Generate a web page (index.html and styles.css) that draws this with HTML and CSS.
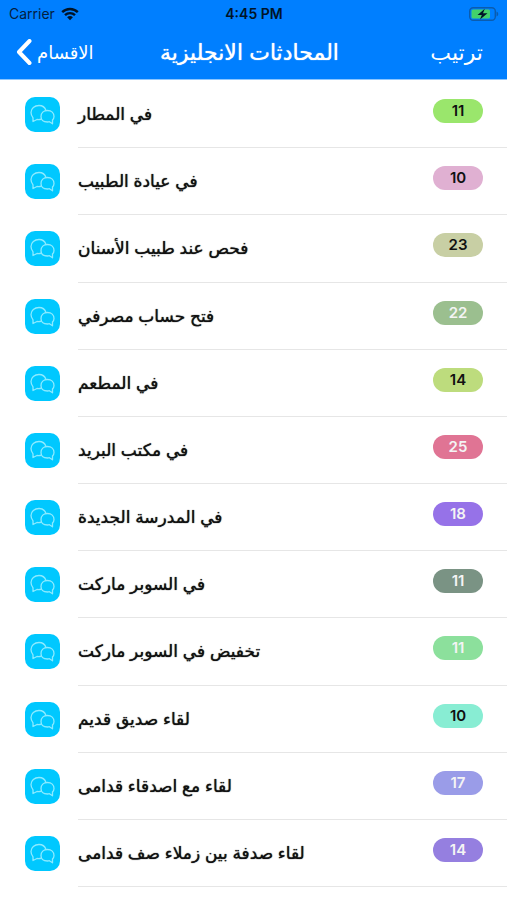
FILE: index.html
```html
<!DOCTYPE html>
<html lang="ar">

<head>
    <meta charset="UTF-8">
    <meta name="viewport" content="width=device-width, initial-scale=1.0">
    <title>المحادثات الانجليزية</title>
    <link rel="stylesheet" href="styles.css">
</head>

<body>
    <svg class="sprite" aria-hidden="true">
        <symbol id="chat" viewBox="0 0 35 35">
            <path d="M21 13.500C20 10.500 17.500 8.500 14 8.500C9.500 8.500 6 11.500 6 15.500C6 17.700 7 19.500 8 20.800V24.500L12 22.500C13.500 22.800 15 22.700 16.500 22.200" />
            <path d="M22.500 13.500C18.500 13.500 16 16 16 19.500C16 22.900 18.500 25 22.500 25C23.200 25 23.800 24.900 24.400 24.700L27.500 26.800V23C28.500 22 29 20.900 29 19.500C29 16 26.500 13.500 22.500 13.500Z" />
        </symbol>
    </svg>
    <header class="header">
        <div class="status">
            <div class="carrier">
                <span>Carrier</span>
                <svg class="wifi" viewBox="0 0 18 14" aria-hidden="true">
                    <path d="M1.200 5.200C5.500 0.900 12.500 0.900 16.800 5.200M4 8.200C6.800 5.400 11.200 5.400 14 8.200" />
                    <path class="dot" d="M6.100 10.200C7.800 8.700 10.200 8.700 11.900 10.200L9 13.200Z" />
                </svg>
            </div>
            <span class="time">4:45 PM</span>
            <svg class="battery" viewBox="0 0 30 14" aria-hidden="true">
                <rect class="shell" x="0.700" y="0.700" width="25.600" height="12.600" rx="3.500" />
                <rect class="level" x="2.500" y="2.500" width="18.500" height="9" rx="1.500" />
                <path class="cap" d="M27.500 4.500C29.800 5.500 29.800 8.500 27.500 9.500Z" />
                <path class="bolt" d="M15.800 1.800L8.500 8H12.800L11 12.500L18.500 6.200H14Z" />
            </svg>
        </div>
        <nav class="navbar">
            <a href="#" class="back">
                <svg viewBox="0 0 16 26" aria-hidden="true">
                    <path d="M13.500 2L3 13L13.500 24" />
                </svg>
                <span dir="rtl">الاقسام</span>
            </a>
            <h1 dir="rtl">المحادثات الانجليزية</h1>
            <button type="button" class="sort" dir="rtl">ترتيب</button>
        </nav>
    </header>
    <ul class="list">
        <li class="row">
            <svg class="icon"><use href="#chat" /></svg>
            <div class="content"><span class="name" dir="rtl">في المطار</span><span class="badge lime">11</span></div>
        </li>
        <li class="row">
            <svg class="icon"><use href="#chat" /></svg>
            <div class="content"><span class="name" dir="rtl">في عيادة الطبيب</span><span class="badge pink">10</span></div>
        </li>
        <li class="row">
            <svg class="icon"><use href="#chat" /></svg>
            <div class="content"><span class="name" dir="rtl">فحص عند طبيب الأسنان</span><span class="badge khaki">23</span></div>
        </li>
        <li class="row">
            <svg class="icon"><use href="#chat" /></svg>
            <div class="content"><span class="name" dir="rtl">فتح حساب مصرفي</span><span class="badge sage light">22</span></div>
        </li>
        <li class="row">
            <svg class="icon"><use href="#chat" /></svg>
            <div class="content"><span class="name" dir="rtl">في المطعم</span><span class="badge olive">14</span></div>
        </li>
        <li class="row">
            <svg class="icon"><use href="#chat" /></svg>
            <div class="content"><span class="name" dir="rtl">في مكتب البريد</span><span class="badge rose light">25</span></div>
        </li>
        <li class="row">
            <svg class="icon"><use href="#chat" /></svg>
            <div class="content"><span class="name" dir="rtl">في المدرسة الجديدة</span><span class="badge violet light">18</span></div>
        </li>
        <li class="row">
            <svg class="icon"><use href="#chat" /></svg>
            <div class="content"><span class="name" dir="rtl">في السوبر ماركت</span><span class="badge slate light">11</span></div>
        </li>
        <li class="row">
            <svg class="icon"><use href="#chat" /></svg>
            <div class="content"><span class="name" dir="rtl">تخفيض في السوبر ماركت</span><span class="badge green light">11</span></div>
        </li>
        <li class="row">
            <svg class="icon"><use href="#chat" /></svg>
            <div class="content"><span class="name" dir="rtl">لقاء صديق قديم</span><span class="badge mint">10</span></div>
        </li>
        <li class="row">
            <svg class="icon"><use href="#chat" /></svg>
            <div class="content"><span class="name" dir="rtl">لقاء مع اصدقاء قدامى</span><span class="badge periwinkle light">17</span></div>
        </li>
        <li class="row">
            <svg class="icon"><use href="#chat" /></svg>
            <div class="content"><span class="name" dir="rtl">لقاء صدفة بين زملاء صف قدامى</span><span class="badge purple light">14</span></div>
        </li>
    </ul>
</body>

</html>
```
FILE: styles.css
```css
* {
    box-sizing: border-box;
}

body {
    font-family: Inter, "DejaVu Sans", sans-serif;
    margin: 0;
    min-height: 100vh;
    display: flex;
    flex-direction: column;
    background-color: #fff;
    color: #111;
}

svg {
    fill: none;
    stroke-linecap: round;
    stroke-linejoin: round;
}

.sprite {
    position: absolute;
    width: 0;
    height: 0;
}

.header {
    background-color: #007fff;
    border-bottom: 1px solid #8cc6ff;
}

.status {
    display: grid;
    grid-template-columns: 1fr auto 1fr;
    align-items: center;
    height: 27px;
    padding: 0 8px 0 9px;
    font-size: 14px;
    color: #04203f;
}

.carrier {
    display: flex;
    align-items: center;
    gap: 6px;
}

.wifi {
    width: 18px;
    height: 14px;
    stroke: #001428;
    stroke-width: 2.4;
    stroke-linecap: butt;
}

.wifi .dot {
    fill: #001428;
    stroke: none;
}

.time {
    font-weight: 600;
    color: #001428;
}

.battery {
    justify-self: end;
    width: 30px;
    height: 14px;
}

.battery .shell {
    stroke: #0b5cae;
    stroke-width: 1.4;
}

.battery .level {
    fill: #43d16b;
}

.battery .cap {
    fill: #0b5cae;
}

.battery .bolt {
    fill: #001428;
}

.navbar {
    display: grid;
    grid-template-columns: 1fr auto 1fr;
    align-items: center;
    height: 52px;
    padding: 0 24px 2px 16px;
    color: #fff;
}

.back {
    display: flex;
    align-items: center;
    gap: 5px;
    font-size: 18px;
    color: #fff;
    text-decoration: none;
}

.back svg {
    width: 16px;
    height: 26px;
    stroke: #fff;
    stroke-width: 4;
}

.navbar h1 {
    margin: 0;
    font-size: 22px;
    font-weight: 400;
    line-height: 26px;
    text-shadow: 0 0 1px #fff;
}

.sort {
    justify-self: end;
    padding: 0;
    border: none;
    background: none;
    font-family: inherit;
    font-size: 22px;
    color: #fff;
    cursor: pointer;
}

.list {
    flex: 1;
    display: flex;
    flex-direction: column;
    margin: 0;
    padding: 1px 0 13px;
    list-style: none;
}

.row {
    flex: 1;
    display: flex;
    align-items: center;
    gap: 18px;
    padding-left: 25px;
}

.icon {
    flex: none;
    width: 35px;
    height: 35px;
    border-radius: 10px;
    background-color: #00c8ff;
    stroke: #8ceaff;
    stroke-width: 1.3;
}

.content {
    flex: 1;
    align-self: stretch;
    display: flex;
    align-items: center;
    justify-content: space-between;
    padding-right: 24px;
    border-bottom: 1px solid #e6e6e6;
}

.name {
    font-size: 17px;
    text-shadow: 0 0 1px #111;
}

.badge {
    width: 50px;
    margin-bottom: 6px;
    border-radius: 12px;
    font-size: 15px;
    font-weight: 600;
    line-height: 24px;
    text-align: center;
}

.light {
    color: #f4f4f4;
}

.lime {
    background-color: #9ae66c;
}

.pink {
    background-color: #e0b0d2;
}

.khaki {
    background-color: #c8cfa4;
}

.sage {
    background-color: #9bbf8f;
}

.olive {
    background-color: #bddc7d;
}

.rose {
    background-color: #e07494;
}

.violet {
    background-color: #9672e8;
}

.slate {
    background-color: #7a9384;
}

.green {
    background-color: #8ce09c;
}

.mint {
    background-color: #88edd3;
}

.periwinkle {
    background-color: #9a9ce8;
}

.purple {
    background-color: #957fe0;
}
```
